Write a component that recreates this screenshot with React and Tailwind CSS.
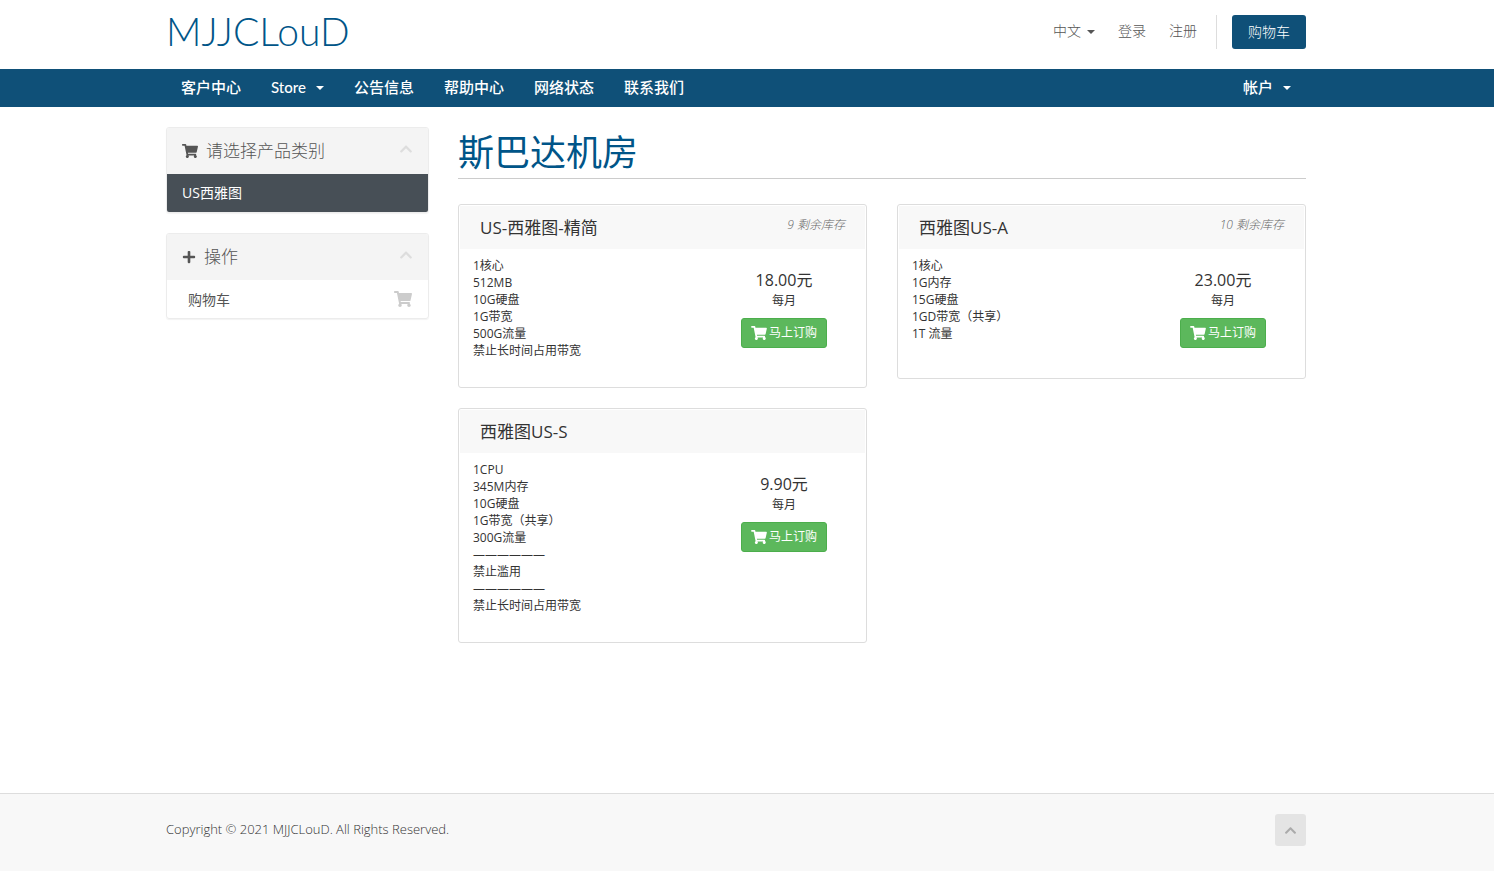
import { FaShoppingCart, FaPlus, FaChevronUp } from "react-icons/fa";

const products = [
  {
    name: "US-西雅图-精简",
    stock: 9,
    price: "18.00元",
    features: ["1核心", "512MB", "10G硬盘", "1G带宽", "500G流量", "禁止长时间占用带宽"],
  },
  {
    name: "西雅图US-A",
    stock: 10,
    price: "23.00元",
    features: ["1核心", "1G内存", "15G硬盘", "1GD带宽（共享）", "1T 流量"],
  },
  {
    name: "西雅图US-S",
    price: "9.90元",
    features: [
      "1CPU",
      "345M内存",
      "10G硬盘",
      "1G带宽（共享）",
      "300G流量",
      "——————",
      "禁止滥用",
      "——————",
      "禁止长时间占用带宽",
    ],
  },
];

function Caret() {
  return (
    <span className="mt-0.5 inline-block border-x-4 border-t-4 border-x-transparent border-t-current align-middle" />
  );
}

function Container({ className = "", children }) {
  return (
    <div className="w-full pr-[22px]">
      <div className={"mx-auto max-w-[1170px] px-[15px] " + className}>{children}</div>
    </div>
  );
}

function NavItem({ children, caret }) {
  return (
    <li>
      <a href="#" className="flex h-[38px] items-center gap-[10px] px-[15px] pb-0.5">
        <span>{children}</span>
        {caret && <Caret />}
      </a>
    </li>
  );
}

function SidePanel({ icon, title, children }) {
  return (
    <section className="overflow-hidden rounded-[3px] border border-[#ececec] shadow-[0_1px_1px_rgba(0,0,0,0.05)]">
      <header className="flex h-[46px] items-center bg-[#f4f4f4] px-[15px] text-[#555]">
        {icon}
        <h2 className="flex-1 pl-2 text-[17px] font-light text-[#555]">{title}</h2>
        <button type="button" aria-label={title} className="mb-1 text-[#ddd]">
          <FaChevronUp size={14} />
        </button>
      </header>
      {children}
    </section>
  );
}

function ProductCard({ product }) {
  return (
    <article className="rounded-[3px] border border-[#ddd] p-px">
      <header className="flex h-[43px] justify-between bg-[#f8f8f8] px-5">
        <h3 className="pt-[10px] text-[17px] leading-6 text-[#333]">{product.name}</h3>
        {product.stock && (
          <span className="pt-[9px] text-[12px] leading-5 font-light text-[#666] italic">
            {product.stock} 剩余库存
          </span>
        )}
      </header>
      <div className="flex justify-between px-[13px] pt-2 pb-[27px]">
        <ul className="text-[12px] leading-[17px] text-[#333]">
          {product.features.map((f, i) => (
            <li key={i}>{f}</li>
          ))}
        </ul>
        <div className="flex w-[136px] flex-col items-center pt-3 pb-0.5 text-[#333]">
          <span className="text-[16px] leading-[22px]">{product.price}</span>
          <span className="text-[12px] leading-[19px]">每月</span>
          <button
            type="button"
            className="mt-2 flex h-[30px] items-center gap-0.5 rounded-[3px] border border-[#4cae4c] bg-[#5cb85c] px-[9px] text-[12px] text-white"
          >
            <FaShoppingCart className="h-[14px] w-4" />
            马上订购
          </button>
        </div>
      </div>
    </article>
  );
}

export default function App() {
  return (
    <div className="flex min-h-screen flex-col bg-white font-['Open_Sans','Noto_Sans_CJK_SC',sans-serif] text-[14px] text-[#333]">
      <header>
        <Container className="flex h-[69px] justify-between">
          <a
            href="#"
            className="pt-2 font-['Lato','Noto_Sans_CJK_SC',sans-serif] text-[39px] leading-[46px] font-light text-[#058]"
          >
            MJJCLouD
          </a>
          <div className="mt-[15px] flex h-[34px] font-light text-[#555]">
            <div className="flex items-center pb-[3px]">
              <button type="button" className="flex items-center gap-[6px]">
                中文 <Caret />
              </button>
              <a href="#" className="ml-[23px]">登录</a>
              <a href="#" className="ml-[23px]">注册</a>
            </div>
            <div className="ml-[19px] border-l border-[#ddd] pl-[15px]">
              <a
                href="#"
                className="flex h-full items-center rounded-[3px] bg-[#0f5078] px-4 pb-0.5 text-white"
              >
                购物车
              </a>
            </div>
          </div>
        </Container>
        <nav className="bg-[#0f5078] font-['Lato','Noto_Sans_CJK_SC',sans-serif] text-[15px] font-medium text-white">
          <Container className="flex justify-between">
            <ul className="flex">
              <NavItem>客户中心</NavItem>
              <NavItem caret>Store</NavItem>
              <NavItem>公告信息</NavItem>
              <NavItem>帮助中心</NavItem>
              <NavItem>网络状态</NavItem>
              <NavItem>联系我们</NavItem>
            </ul>
            <ul className="flex">
              <NavItem caret>帐户</NavItem>
            </ul>
          </Container>
        </nav>
      </header>

      <Container className="grid grid-cols-[263px_minmax(0,1fr)] gap-[29px] pt-5 pb-5">
        <aside className="flex flex-col gap-5">
          <SidePanel icon={<FaShoppingCart size={16} />} title="请选择产品类别">
            <a href="#" className="flex h-[38px] items-center bg-[#474f56] px-[15px] pb-0.5 text-white">
              US西雅图
            </a>
          </SidePanel>
          <SidePanel icon={<FaPlus size={14} />} title="操作">
            <a href="#" className="flex h-[38px] items-center justify-between pr-4 pl-[21px] text-[#555]">
              购物车
              <FaShoppingCart size={18} className="text-[#ccc]" />
            </a>
          </SidePanel>
        </aside>
        <main>
          <h1 className="h-[52px] border-b border-[#ccc] text-[36px] leading-[52px] text-[#058]">
            斯巴达机房
          </h1>
          <div className="mt-[25px] grid grid-cols-2 items-start gap-x-[30px] gap-y-5">
            {products.map((p) => (
              <ProductCard key={p.name} product={p} />
            ))}
          </div>
        </main>
      </Container>

      <footer className="mt-auto border-t border-[#ddd] bg-[#f8f8f8]">
        <Container className="flex h-[77px] items-start justify-between pt-5">
          <p className="text-[13px] leading-[30px] font-light text-[#333]">
            Copyright © 2021 MJJCLouD. All Rights Reserved.
          </p>
          <a
            href="#"
            aria-label="Back to top"
            className="flex h-8 w-[31px] items-center justify-center rounded-[3px] bg-[#e4e4e4] text-[#aaa]"
          >
            <FaChevronUp size={13} />
          </a>
        </Container>
      </footer>
    </div>
  );
}
